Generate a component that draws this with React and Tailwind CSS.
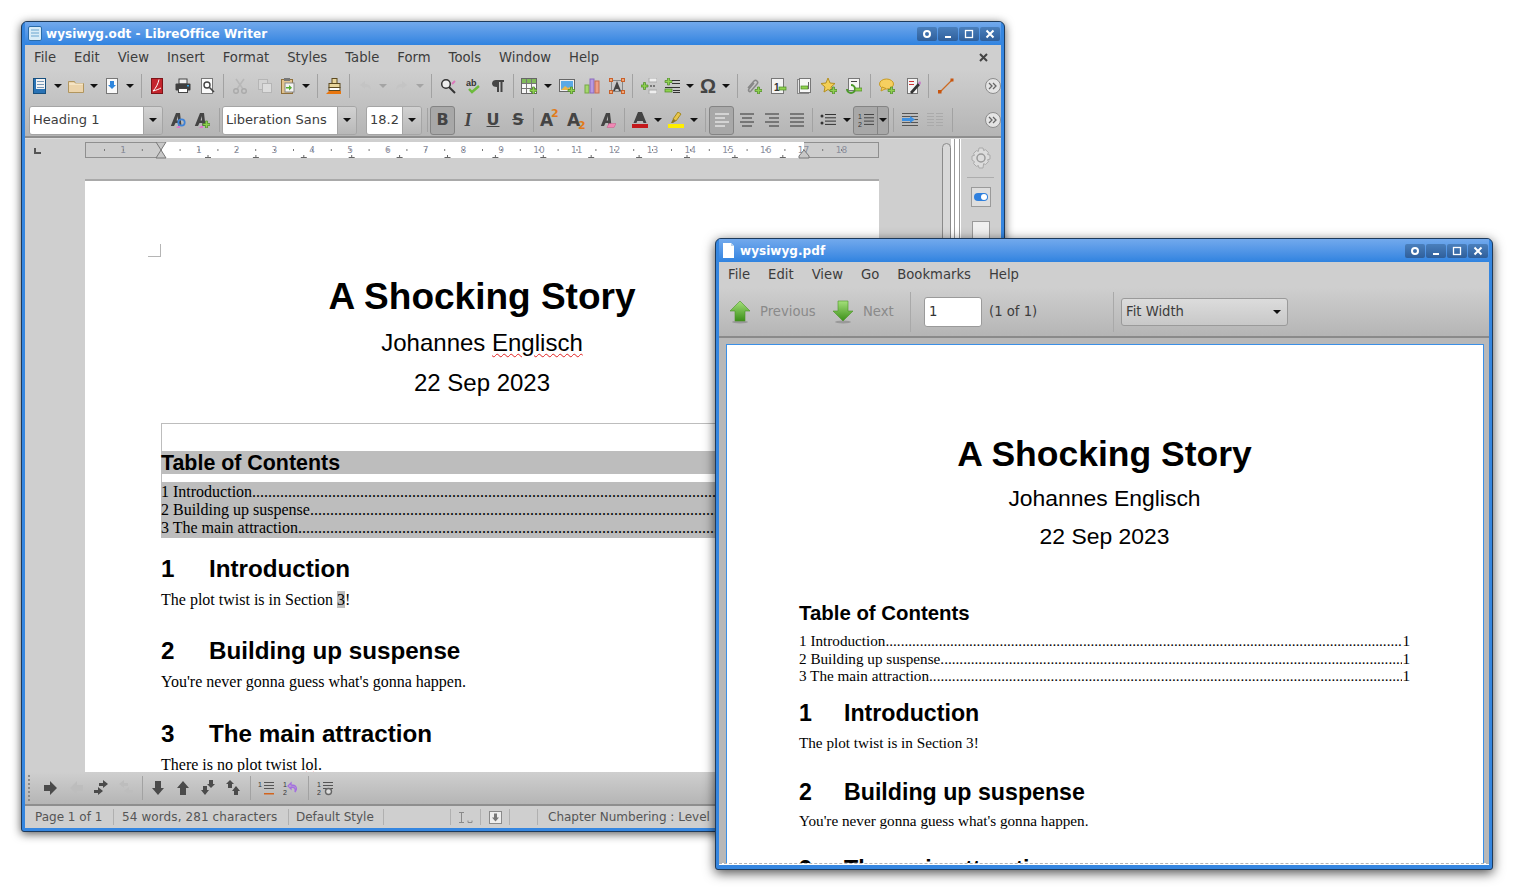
import React from 'react';

const UI = "[font-family:'DejaVu_Sans',sans-serif]";
const ARIAL = "[font-family:'Liberation_Sans',sans-serif]";
const TIMES = "[font-family:'Liberation_Serif',serif]";

const DOTS = '.'.repeat(260);

const Svg = ({ w = 16, h = 16, children }) => (
  <svg width={w} height={h} viewBox={`0 0 ${w} ${h}`} className="block shrink-0">{children}</svg>
);

const Plus = ({ x = 9, y = 9 }) => (
  <path transform={`translate(${x} ${y})`} d="M2.5 0h2v2.5H7v2H4.5V7h-2V4.5H0v-2h2.5z" fill="#8fd14f" stroke="#4b8a24" strokeWidth="0.7" />
);
const Minus = ({ x = 9, y = 10 }) => <rect x={x} y={y} width="7" height="3" fill="#8fd14f" stroke="#4b8a24" strokeWidth="0.7" />;
const Page = ({ x = 2, y = 0, w = 12, h = 16 }) => <rect x={x + 0.5} y={y + 0.5} width={w - 1} height={h - 1} fill="#fafafa" stroke="#777" />;
const Lines = ({ x, y, w, n = 4, gap = 3, c = '#444' }) => (
  <g fill={c}>{Array.from({ length: n }, (_, i) => <rect key={i} x={x} y={y + i * gap} width={w} height="1" />)}</g>
);
const ItalicA = () => <path fillRule="evenodd" d="M6 1h4l1.500 13H8.500l-.2-3H5.500L4 14H.8zM8.100 8.500L7.800 4 6.600 8.500z" fill="#444" />;

const Arrow = ({ light }) => (
  <svg width="8" height="4" viewBox="0 0 8 4" className="block shrink-0"><path d="M0 0h8L4 4z" fill={light ? '#a4a4a4' : '#111'} /></svg>
);
const Sep = ({ className = 'ml-[7px] mr-[8px]' }) => <div className={`w-px h-[24px] bg-[#a2a2a2] shrink-0 ${className}`} />;

const icons = {
  newdoc: <Svg><rect x="1.5" y="0.5" width="12" height="15" fill="#2a73b5" stroke="#17507f" /><rect x="4" y="1" width="9" height="10" fill="#f4f4f4" /><Lines x={5} y={3} w={7} n={3} c="#7a9ab8" /></Svg>,
  folder: <Svg><path d="M0.5 3.5h6l1 2h8v9h-15z" fill="#ecd4ab" stroke="#b1965f" /><path d="M1 6h14" stroke="#fff3dc" /></Svg>,
  save: <Svg><Page x={2} /><path d="M6 3h4v4h2l-4 4-4-4h2z" fill="#2f86dd" /></Svg>,
  pdf: <Svg><rect x="1.5" y="0.5" width="11" height="15" fill="#c4242c" stroke="#7d1318" /><path d="M9 1.5C8 6 6 10 3 13c4-1 6-2 8-3" fill="none" stroke="#fff" strokeWidth="1" /></Svg>,
  print: <Svg><rect x="4" y="1" width="8" height="5" fill="#eee" stroke="#444" /><rect x="0.5" y="5.5" width="15" height="7" rx="1" fill="#3f3f3f" /><rect x="12" y="7" width="2" height="1.5" fill="#37a6e8" /><rect x="3.5" y="10.5" width="9" height="4" fill="#fff" stroke="#444" /></Svg>,
  preview: <Svg><Page x={1} /><circle cx="7" cy="7" r="3" fill="#fff" stroke="#444" strokeWidth="1.4" /><path d="M9.5 9.5l4.5 4.5" stroke="#444" strokeWidth="1.6" /></Svg>,
  cut: <Svg><path d="M4 1l7 10M12 1L5 11" stroke="#b8b8b8" strokeWidth="1.6" /><circle cx="4" cy="13" r="2.3" fill="none" stroke="#aaa" strokeWidth="1.4" /><circle cx="12" cy="13" r="2.3" fill="none" stroke="#aaa" strokeWidth="1.4" /></Svg>,
  copy: <Svg><rect x="1.5" y="1.5" width="9" height="10" fill="#d3d3d3" stroke="#b5b5b5" /><rect x="5.5" y="5.5" width="9" height="9" fill="#dcdcdc" stroke="#b5b5b5" /></Svg>,
  paste: <Svg><rect x="1.5" y="1.5" width="11" height="14" fill="#e1c38e" stroke="#8e6f3a" /><rect x="4" y="0" width="6" height="3" fill="#777" /><rect x="5" y="5" width="9" height="9" fill="#f4f4f4" stroke="#888" /><path d="M6 9h3V7l3 2.8-3 2.8v-2H6z" fill="#57ad35" /></Svg>,
  clone: <Svg><rect x="6" y="0.5" width="5" height="5" fill="#e8d59c" stroke="#5d4a20" /><rect x="3" y="5.5" width="11" height="4" fill="#e8d59c" stroke="#5d4a20" /><rect x="3" y="9.5" width="11" height="3" fill="#fff" stroke="#5d4a20" /><path d="M0 16l3-3h12v3z" fill="#e8760f" /></Svg>,
  undo: <Svg><path d="M2 7l5-4v3c4 0 6 2 6 6-1-2-3-3-6-3v2z" fill="#c4c4c4" /></Svg>,
  redo: <Svg><path d="M14 7L9 3v3c-4 0-6 2-6 6 1-2 3-3 6-3v2z" fill="#c4c4c4" /></Svg>,
  find: <Svg><circle cx="6" cy="6" r="4.3" fill="#eee" stroke="#333" strokeWidth="1.5" /><path d="M9 9l6 6" stroke="#333" strokeWidth="2" /><path d="M15 3l-3 3" stroke="#dd77bb" strokeWidth="2" /></Svg>,
  spell: <Svg><text x="1" y="7.5" fontSize="9" fontWeight="700" fill="#333" className={ARIAL}>ab</text><path d="M4 11l3 3 7-6" fill="none" stroke="#6cbb3c" strokeWidth="2.4" /></Svg>,
  para: <Svg><path d="M6 2h8v2h-1.5v10h-2V4H9v10H7V9C4 9 2 8 2 5.500S4 2 6 2z" fill="#444" /></Svg>,
  table: <Svg><rect x="0.5" y="0.5" width="15" height="15" fill="#f7f7f7" stroke="#666" /><rect x="1" y="1" width="14" height="4" fill="#7fb95a" /><path d="M5.500 1v14M10.500 1v14M1 5.500h14M1 10.500h14" stroke="#777" /><Plus /></Svg>,
  image: <Svg><rect x="0.5" y="1.5" width="15" height="12" fill="#f0f0f0" stroke="#666" /><rect x="2" y="3" width="12" height="9" fill="#5aa9e6" /><path d="M2 12l4-4 3 2 2-1 3 3z" fill="#e8b64c" /><Plus /></Svg>,
  chart: <Svg><rect x="1" y="7" width="4" height="8" fill="#a5d86e" stroke="#76a845" /><rect x="6" y="1" width="4" height="14" fill="#b79ae0" stroke="#8a68bd" /><rect x="11" y="3" width="4" height="12" fill="#ee9f86" stroke="#c56b50" /></Svg>,
  textbox: <Svg><rect x="2.500" y="2.500" width="11" height="11" fill="none" stroke="#444" strokeDasharray="1 1" /><rect x="0.500" y="0.500" width="3" height="3" fill="#f2a777" stroke="#c8602a" /><rect x="12.500" y="0.500" width="3" height="3" fill="#f2a777" stroke="#c8602a" /><rect x="0.500" y="12.500" width="3" height="3" fill="#f2a777" stroke="#c8602a" /><rect x="12.500" y="12.500" width="3" height="3" fill="#f2a777" stroke="#c8602a" /><path d="M8 3l4 10h-2l-.7-2H6.700L6 13H4z" fill="#444" /></Svg>,
  field: <Svg><rect x="8" y="0" width="8" height="4" fill="#eee" stroke="#aaa" /><rect x="8" y="12" width="8" height="4" fill="#eee" stroke="#aaa" /><Plus x={0} y={4.500} /><path d="M9 8h2M12 8h2" stroke="#777" strokeWidth="2" /></Svg>,
  rows: <Svg><Plus x={1} y={0} /><Lines x={8} y={2} w={8} n={2} gap={3} c="#333" /><Lines x={1} y={9} w={15} n={1} c="#333" /><Minus x={1} y={11} /><Lines x={9} y={12} w={7} n={2} gap={2} c="#333" /></Svg>,
  link: <Svg><path d="M2 10l6-7c2-2 5 1 3 3l-6 7c-1.500 1.500-3.500-.5-2-2l5-6" fill="none" stroke="#888" strokeWidth="1.500" /><Plus /></Svg>,
  foot: <Svg><rect x="0.500" y="0.500" width="12" height="15" fill="#f4f4f4" stroke="#777" /><text x="3" y="13" fontSize="10" fontWeight="700" fill="#333" className={ARIAL}>1</text><Minus x={8} y={9} /></Svg>,
  end: <Svg><rect x="1.500" y="1.500" width="11" height="14" fill="#e6e6e6" stroke="#888" /><rect x="3.500" y="0.500" width="11" height="14" fill="#f7f7f7" stroke="#777" /><Minus x={5} y={8} /><rect x="12" y="4" width="1" height="7" fill="#666" /></Svg>,
  star: <Svg><path d="M7 0l2 5 5 .5-4 3.500 1 5-4-2.500-4 2.500 1-5-4-3.500L5 5z" fill="#f3cf55" stroke="#b48f1f" /><Plus /></Svg>,
  cross: <Svg><rect x="2.500" y="0.500" width="11" height="12" fill="#f4f4f4" stroke="#777" /><rect x="5" y="3" width="6" height="1" fill="#444" /><path d="M1 11a4 4 0 1 0 4-4" fill="none" stroke="#4b9a2a" strokeWidth="2" /><Minus x={9} y={10} /></Svg>,
  comment: <Svg><ellipse cx="7.500" cy="6" rx="7" ry="5" fill="#f6cf5f" stroke="#c69a25" /><path d="M3 9l-1 4 5-2.500z" fill="#f6cf5f" stroke="#c69a25" /><Plus /></Svg>,
  track: <Svg><rect x="2.500" y="0.500" width="10" height="15" fill="#f4f4f4" stroke="#777" /><Lines x={4} y={3} w={5} n={2} gap={3} c="#cc3333" /><path d="M5 14l8-9 2 2-8 9z" fill="#333" /><path d="M13 5l2 2 1-2-1-2z" fill="#c678c8" /></Svg>,
  line: <Svg><path d="M2 14L14 2" stroke="#cc6a22" strokeWidth="1.200" /><rect x="0" y="12" width="3.500" height="3.500" fill="#c8550f" /><rect x="12.500" y="0.500" width="3" height="3" fill="#c8550f" /></Svg>,
  styleUpd: <Svg><ItalicA /><circle cx="11.500" cy="10.500" r="3.200" fill="none" stroke="#3f82d6" strokeWidth="1.800" /><path d="M6 16l2-2h2v2z" fill="#df77c8" /></Svg>,
  styleNew: <Svg><ItalicA /><Plus /><path d="M5 16l2-2h2v2z" fill="#df77c8" /></Svg>,
  clearFmt: <Svg><ItalicA /><path d="M7 15.500l2-4h7l-2 4z" fill="#f088b4" stroke="#c45888" strokeWidth="0.500" /></Svg>,
  fontColor: <Svg><path d="M6 0h4l4.500 11H11.500l-.7-2H5.200l-.7 2H1.500z" fill="#444" /><rect x="0" y="12" width="16" height="4" fill="#c4191c" /></Svg>,
  highlight: <Svg><path d="M10 0l3 2-5 7-3-2z" fill="#e7c54b" stroke="#a58a20" /><path d="M5 7l3 2-3 2H3z" fill="#8a7426" /><rect x="0" y="12" width="16" height="4" fill="#ffee00" /></Svg>,
  outIn: <Svg><Lines x={0} y={1} w={16} n={5} gap={3} c="#555" /><path d="M0 6h8V4l5 3.500L8 11V9H0z" fill="#3d8fe0" /></Svg>,
  outOut: <Svg><Lines x={0} y={1} w={7} n={5} gap={3} c="#aaa" /><Lines x={9} y={1} w={7} n={5} gap={3} c="#aaa" /></Svg>,
  bullets: <Svg><circle cx="2" cy="4" r="1.500" fill="#333" /><circle cx="2" cy="11" r="1.500" fill="#333" /><Lines x={5} y={2} w={11} n={4} gap={3.300} c="#333" /></Svg>,
  numbers: <Svg><text x="0" y="7" fontSize="7" fill="#333" className={ARIAL}>1</text><text x="0" y="15" fontSize="7" fill="#333" className={ARIAL}>2</text><Lines x={6} y={2} w={10} n={4} gap={3.300} c="#444" /></Svg>,
  right: <Svg><path d="M1 5h6V1l7 7-7 7v-4H1z" fill="#4b4b4b" /></Svg>,
  left: <Svg><path d="M15 5H9V1L2 8l7 7v-4h6z" fill="#bdbdbd" /></Svg>,
  right2: <Svg><path d="M6 3h4V0l5 4-5 4V6H6z" fill="#4b4b4b" /><path d="M1 10h4V7l5 4-5 4v-2H1z" fill="#4b4b4b" /></Svg>,
  left2: <Svg><path d="M10 3H6V0L1 4l5 4V6h4z" fill="#bdbdbd" /><path d="M15 10h-4V7l-5 4 5 4v-2h4z" fill="#bdbdbd" /></Svg>,
  down: <Svg><path d="M5 1h6v7h3l-6 7-6-7h3z" fill="#4b4b4b" /></Svg>,
  up: <Svg><path d="M5 15h6V8h3L8 1 2 8h3z" fill="#4b4b4b" /></Svg>,
  down2: <Svg><path d="M9 0h4v4h2l-4 4-4-4h2z" fill="#4b4b4b" /><path d="M3 6h4v4h2l-4 5-4-5h2z" fill="#4b4b4b" /></Svg>,
  up2: <Svg><path d="M3 8h4V4h2L5 0 1 4h2z" fill="#4b4b4b" /><path d="M9 15h4v-4h2l-4-5-4 5h2z" fill="#4b4b4b" /></Svg>,
  numList: <Svg><text x="0" y="7" fontSize="7" fill="#333" className={ARIAL}>1</text><Lines x={6} y={2} w={10} n={3} gap={3} c="#555" /><rect x="6" y="13" width="10" height="1.500" fill="#d2641e" /></Svg>,
  numUndo: <Svg><text x="0" y="7" fontSize="7" fill="#333" className={ARIAL}>1</text><text x="0" y="15" fontSize="7" fill="#333" className={ARIAL}>2</text><path d="M8 3l-3 3 3 3V7c3 0 5 1 4 5 3-4 1-7-4-7z" fill="none" stroke="#a46fe0" strokeWidth="1.300" /></Svg>,
  numGear: <Svg><text x="0" y="7" fontSize="7" fill="#333" className={ARIAL}>1</text><text x="0" y="15" fontSize="7" fill="#333" className={ARIAL}>2</text><Lines x={6} y={2} w={10} n={3} gap={3} c="#555" /><circle cx="11.500" cy="11.500" r="3" fill="#ddd" stroke="#666" strokeWidth="1.400" /></Svg>,
};

const Ic = ({ n }) => icons[n];

const More = ({ className = '' }) => (
  <div className={`absolute left-[960px] w-[16px] h-[16px] rounded-full border border-[#8c8c8c] bg-[#e4e4e4] flex items-center justify-center ${className}`}>
    <svg width="10" height="8" viewBox="0 0 10 8"><path d="M1 1l3 3-3 3M5 1l3 3-3 3" fill="none" stroke="#666" strokeWidth="1.300" /></svg>
  </div>
);

const WinButtons = () => (
  <div className="flex gap-px mr-[1px]">
    {[
      <svg key="a" width="10" height="10" viewBox="0 0 10 10"><circle cx="5" cy="5" r="3" fill="none" stroke="#fff" strokeWidth="2" /></svg>,
      <svg key="b" width="10" height="10" viewBox="0 0 10 10"><rect x="2" y="7" width="6" height="2" fill="#fff" /></svg>,
      <svg key="c" width="10" height="10" viewBox="0 0 10 10"><rect x="1.500" y="1.500" width="7" height="7" fill="none" stroke="#fff" strokeWidth="1.300" /></svg>,
      <svg key="d" width="10" height="10" viewBox="0 0 10 10"><path d="M1.500 1.500l7 7M8.500 1.500l-7 7" stroke="#fff" strokeWidth="2" /></svg>,
    ].map((g, i) => (
      <div key={i} className="w-[20px] h-[14px] rounded-[2px] bg-gradient-to-b from-[#4a7fbc] to-[#2f5f9b] flex items-center justify-center">{g}</div>
    ))}
  </div>
);

const TitleBar = ({ icon, title }) => (
  <div className="h-[23px] shrink-0 flex items-center justify-between bg-gradient-to-b from-[#72a9ec] to-[#2f83e0] pl-[3px]">
    <div className="flex items-center gap-[4px]">
      {icon}
      <span className={`${UI} text-[12px] font-bold text-white tracking-[0.05px]`}>{title}</span>
    </div>
    <WinButtons />
  </div>
);

const Combo = ({ text, w, arrowW = 'w-[19px]' }) => (
  <div className={`flex h-[29px] shrink-0 rounded-[3px] border border-[#a5a5a5] overflow-hidden ${w}`}>
    <div className={`flex-1 bg-white flex items-center pl-[3px] ${UI} text-[13px] text-[#3c3c3c]`}>{text}</div>
    <div className={`${arrowW} bg-gradient-to-b from-[#d2d2d2] to-[#b8b8b8] border-l border-[#a5a5a5] flex items-center justify-center`}><Arrow /></div>
  </div>
);

const Ruler = () => {
  const nums = [[38, '1'], ...Array.from({ length: 18 }, (_, i) => [76 + 37.8 * (i + 1), String(i + 1)])];
  const tabs = Array.from({ length: 13 }, (_, i) => 123 + 47.9 * i);
  const dots = Array.from({ length: 40 }, (_, i) => 19 + 18.9 * i);
  return (
    <svg width="796" height="18" viewBox="0 0 796 18" className="block">
      <rect x="0.500" y="0.500" width="793" height="15" fill="#cdcdcd" stroke="#8f8f8f" />
      <rect x="76" y="0" width="643" height="16" fill="#fff" />
      {dots.map((x) => <rect key={x} x={x} y="7" width="1" height="2" fill="#777" />)}
      {tabs.map((x) => <path key={x} d={`M${x - 3} 15.500h6M${x} 13v3`} stroke="#666" />)}
      {nums.map(([x, t]) => (
        <text key={x} x={x} y="11" textAnchor="middle" fontSize="9" fill="#8a8d9c" className={UI}>{t}</text>
      ))}
      <path d="M71 0h10l-5 8zM71 16h10l-5-8z" fill="#c8c8c8" stroke="#777" />
      <path d="M714 16h10v-2l-5-6-5 6z" fill="#c8c8c8" stroke="#777" />
    </svg>
  );
};

const WriterPage = () => (
  <div className={`relative ml-[60px] w-[794px] h-[700px] bg-white border-t-2 border-[#a9a9a9] px-[76px] ${TIMES} text-black`}>
    <div className="absolute left-[63px] top-[63px] w-[13px] h-[13px] border-r border-b border-[#b5b5b5]" />
    <div className={`${ARIAL} text-center font-bold text-[37px] leading-[44px] pt-[94px]`}>A Shocking Story</div>
    <div className={`${ARIAL} text-center text-[24px] leading-[28px] mt-[10px]`}>
      Johannes <span className="underline decoration-wavy decoration-[#e02020] decoration-1 underline-offset-2">Englisch</span>
    </div>
    <div className={`${ARIAL} text-center text-[24px] leading-[28px] mt-[12px]`}>22 Sep 2023</div>
    <div className="mt-[26px] border-t border-l border-[#bdbdbd] pt-[27px]">
      <div className={`${ARIAL} bg-[#bdbdbd] h-[23px] font-bold text-[21.4px] leading-[24px] -ml-px`}>Table of Contents</div>
      <div className="bg-[#bdbdbd] mt-[8px] h-[56px] pt-[1px] -ml-px text-[16px] leading-[18px] overflow-hidden whitespace-nowrap">
        <div>1 Introduction{DOTS}</div>
        <div>2 Building up suspense{DOTS}</div>
        <div>3 The main attraction{DOTS}</div>
      </div>
    </div>
    <div className={`${ARIAL} flex font-bold text-[24.2px] leading-[30px] mt-[16px]`}><span className="w-[48px]">1</span>Introduction</div>
    <div className="text-[16px] leading-[20px] mt-[6px]">The plot twist is in Section <span className="bg-[#bdbdbd]">3</span>!</div>
    <div className={`${ARIAL} flex font-bold text-[24.2px] leading-[30px] mt-[26px]`}><span className="w-[48px]">2</span>Building up suspense</div>
    <div className="text-[16px] leading-[20px] mt-[6px]">You're never gonna guess what's gonna happen.</div>
    <div className={`${ARIAL} flex font-bold text-[24.2px] leading-[30px] mt-[27px]`}><span className="w-[48px]">3</span>The main attraction</div>
    <div className="text-[16px] leading-[20px] mt-[6px]">There is no plot twist <span className="underline decoration-wavy decoration-[#e02020] decoration-1">lol</span>.</div>
  </div>
);

const WriterWindow = () => (
  <div className="absolute left-[21px] top-[21px] w-[984px] h-[811px] rounded-t-[6px] rounded-b-[3px] border border-[#1d3a5c] bg-[#3586e0] shadow-[0_2px_10px_rgba(0,0,0,0.65)] flex flex-col px-[3px] pb-[3px] overflow-hidden">
    <TitleBar
      title="wysiwyg.odt - LibreOffice Writer"
      icon={<svg width="14" height="15" viewBox="0 0 14 15"><rect x="0.500" y="0.500" width="13" height="14" rx="1.500" fill="#d9ecf7" stroke="#2a6ba8" /><path d="M3 4h8M3 7h8M3 10h8" stroke="#6aa5cf" /></svg>}
    />
    <div className={`flex-1 min-h-0 flex flex-col relative bg-[#cfcfcf] ${UI} text-[#3c3c3c]`}>
      <div className="relative h-[24px] shrink-0 flex items-center pt-px pl-[9px] gap-[18px] text-[13.2px]">
        {['File', 'Edit', 'View', 'Insert', 'Format', 'Styles', 'Table', 'Form', 'Tools', 'Window', 'Help'].map((m) => <span key={m}>{m}</span>)}
        <svg width="9" height="9" viewBox="0 0 9 9" className="absolute left-[954px] top-[8px]"><path d="M1 1l7 7M8 1L1 8" stroke="#444" strokeWidth="2" /></svg>
      </div>
      <div className="relative h-[69px] shrink-0 bg-gradient-to-b from-[#cfcfcf] to-[#b5b5b5] border-b-2 border-[#8e8e8e]">
        <div className="h-[35px] pb-px flex items-center pl-[7px]">
          <div className="flex items-center gap-[6px]">
            <Ic n="newdoc" /><Arrow /><Ic n="folder" /><Arrow /><Ic n="save" /><Arrow />
          </div>
          <Sep />
          <div className="flex items-center gap-[9px]"><Ic n="pdf" /><Ic n="print" /><Ic n="preview" /></div>
          <Sep />
          <div className="flex items-center"><Ic n="cut" /><div className="ml-[9px]"><Ic n="copy" /></div><div className="ml-[7px]"><Ic n="paste" /></div><div className="ml-[6px]"><Arrow /></div></div>
          <Sep />
          <Ic n="clone" />
          <Sep />
          <div className="flex items-center gap-[5px]"><Ic n="undo" /><Arrow light /><div className="mx-px"><Ic n="redo" /></div><div className="ml-px"><Arrow light /></div></div>
          <Sep className="ml-[7px] mr-[8px]" />
          <div className="flex items-center gap-[9px]"><Ic n="find" /><Ic n="spell" /><Ic n="para" /></div>
          <Sep className="ml-[7px] mr-[7px]" />
          <div className="flex items-center gap-[7px]"><Ic n="table" /><Arrow /><Ic n="image" /><div className="ml-[2px]"><Ic n="chart" /></div><div className="ml-[2px]"><Ic n="textbox" /></div></div>
          <Sep />
          <div className="flex items-center gap-[6px]"><Ic n="field" /><div className="ml-px"><Ic n="rows" /></div><Arrow />
            <span className={`${ARIAL} font-bold text-[20px] leading-[16px] w-[16px] text-center text-[#444]`}>Ω</span><Arrow />
          </div>
          <Sep />
          <div className="flex items-center gap-[9px]"><Ic n="link" /><Ic n="foot" /><Ic n="end" /><Ic n="star" /><Ic n="cross" /></div>
          <Sep className="ml-[8px] mr-[8px]" />
          <div className="flex items-center gap-[10px]"><Ic n="comment" /><Ic n="track" /></div>
          <Sep className="ml-[7px] mr-[9px]" />
          <Ic n="line" />
        </div>
        <More className="top-[9px]" />
        <div className="h-[32px] flex items-center pl-[4px]">
          <Combo text="Heading 1" w="w-[134px]" />
          <div className="ml-[7px]"><Ic n="styleUpd" /></div>
          <div className="ml-[8px]"><Ic n="styleNew" /></div>
          <Sep className="ml-[9px] mr-[2px]" />
          <Combo text="Liberation Sans" w="w-[135px]" />
          <div className="ml-[9px]"><Combo text="18.2" w="w-[56px]" /></div>
          <Sep className="ml-[5px] mr-[2px]" />
          <div className="w-[25px] h-[29px] rounded-[3px] border border-[#848484] bg-[#a8a8a8] flex items-center justify-center">
            <span className={`${UI} font-bold text-[16px] text-[#444]`}>B</span>
          </div>
          <div className="flex items-center ml-[5px] gap-[9px] text-[#444] text-[16px]">
            <span className={`${TIMES} italic font-bold w-[16px] text-center text-[18px]`}>I</span>
            <span className={`${UI} underline font-bold w-[16px] text-center`}>U</span>
            <span className={`${UI} line-through font-bold w-[16px] text-center`}>S</span>
          </div>
          <Sep className="ml-[7px] mr-[6px]" />
          <div className="flex items-center gap-[11px] text-[#444]">
            <span className={`${UI} relative font-bold text-[17px] leading-none w-[16px]`}>A<span className="absolute -top-[4px] left-[11px] text-[11px] text-[#e07b1c]">2</span></span>
            <span className={`${UI} relative font-bold text-[17px] leading-none w-[16px]`}>A<span className="absolute top-[8px] left-[11px] text-[11px] text-[#e07b1c]">2</span></span>
          </div>
          <Sep className="ml-[8px] mr-[8px]" />
          <Ic n="clearFmt" />
          <Sep className="ml-[8px] mr-[7px]" />
          <div className="flex items-center gap-[6px]"><Ic n="fontColor" /><Arrow /></div>
          <div className="flex items-center gap-[6px] ml-[6px]"><Ic n="highlight" /><Arrow /></div>
          <Sep className="ml-[7px] mr-[3px]" />
          <div className="w-[25px] h-[29px] rounded-[3px] border border-[#848484] bg-[#a8a8a8] flex items-center justify-center">
            <svg width="16" height="14" viewBox="0 0 16 14"><path d="M1 1h14M1 5h10M1 9h14M1 13h10" stroke="#fff" /></svg>
          </div>
          <div className="flex items-center gap-[9px] ml-[5px]">
            <svg width="16" height="14" viewBox="0 0 16 14"><path d="M1 1h14M3 5h10M1 9h14M3 13h10" stroke="#333" /></svg>
            <svg width="16" height="14" viewBox="0 0 16 14"><path d="M1 1h14M5 5h10M1 9h14M5 13h10" stroke="#333" /></svg>
            <svg width="16" height="14" viewBox="0 0 16 14"><path d="M1 1h14M1 5h14M1 9h14M1 13h14" stroke="#333" /></svg>
          </div>
          <Sep className="ml-[7px] mr-[7px]" />
          <div className="flex items-center gap-[7px]"><Ic n="bullets" /><Arrow /></div>
          <div className="ml-[2px] flex w-[36px] h-[29px] rounded-[3px] border border-[#848484] bg-[#a8a8a8]">
            <div className="w-[24px] flex items-center justify-center border-r border-[#848484]"><Ic n="numbers" /></div>
            <div className="flex-1 flex items-center justify-center"><Arrow /></div>
          </div>
          <Sep className="ml-[4px] mr-[8px]" />
          <Ic n="outIn" />
          <div className="ml-[9px]"><Ic n="outOut" /></div>
          <Sep className="ml-[9px] mr-0" />
        </div>
        <More className="top-[43px]" />
      </div>
      <div className="flex-1 min-h-0 flex border-t border-[#dcdcdc]">
        <div className="w-[917px] shrink-0 overflow-hidden">
          <div className="relative h-[40px] pt-[3px]">
            <div className="absolute left-[9px] top-[9px] w-[7px] h-[6px] border-l-2 border-b-2 border-[#555]" />
            <div className="ml-[60px]"><Ruler /></div>
          </div>
          <WriterPage />
        </div>
        <div className="w-[9px] shrink-0 mt-[4px] h-[200px] rounded-t-[5px] border border-[#8a8a8a] bg-[#d8d8d8]" />
        <div className="w-[3px] shrink-0 bg-white" />
        <div className="w-[6px] shrink-0 bg-white border-x border-[#9a9a9a]" />
        <div className="w-[40px] shrink-0 flex flex-col items-center border-l border-white pt-[8px]">
          <svg width="22" height="22" viewBox="0 0 22 22">
            <path d="M9 1h4l.6 2.500 2-.8 2.800 2.800-.8 2 2.400.6v4l-2.400.6.8 2-2.800 2.800-2-.8L13 21H9l-.6-2.400-2 .8-2.800-2.800.8-2L2 13V9l2.400-.6-.8-2 2.800-2.800 2 .8z" fill="#dcdcdc" stroke="#a9a9a9" />
            <circle cx="11" cy="11" r="4" fill="none" stroke="#9a9a9a" strokeWidth="1.500" />
          </svg>
          <div className="w-[27px] h-px bg-[#adadad] mt-[8px]" />
          <div className="w-[20px] h-[20px] mt-[9px] border border-[#9a9a9a] bg-[#dedede] flex items-center justify-center">
            <div className="w-[14px] h-[8px] rounded-full bg-[#2f80de] flex justify-end items-center pr-px"><div className="w-[6px] h-[6px] rounded-full bg-white" /></div>
          </div>
          <div className="w-[18px] h-[40px] mt-[14px] border border-[#9a9a9a] bg-[#f0f0f0]" />
        </div>
      </div>
      <div className="absolute left-0 right-0 bottom-[22px] h-[34px] bg-gradient-to-b from-[#cfcfcf] to-[#b5b5b5] border-b-2 border-[#8e8e8e] flex items-center pl-[3px]">
        <div className="w-[3px] h-[26px] border-l-2 border-dotted border-[#8a8a8a]" />
        <div className="flex items-center gap-[9px] ml-[12px]"><Ic n="right" /><Ic n="left" /><Ic n="right2" /><Ic n="left2" /></div>
        <Sep className="ml-[8px] mr-[7px]" />
        <div className="flex items-center gap-[9px]"><Ic n="down" /><Ic n="up" /><Ic n="down2" /><Ic n="up2" /></div>
        <Sep className="ml-[9px] mr-[7px]" />
        <div className="flex items-center gap-[9px]"><Ic n="numList" /><Ic n="numUndo" /></div>
        <Sep className="ml-[9px] mr-[8px]" />
        <Ic n="numGear" />
      </div>
      <div className="absolute left-0 right-0 bottom-0 h-[22px] bg-[#cfcfcf] flex items-center text-[12px] text-[#555] whitespace-nowrap">
        <span className="pl-[10px] w-[88px]">Page 1 of 1</span>
        <div className="w-px h-[16px] bg-[#b0b0b0]" />
        <span className="pl-[8px] w-[174px] tracking-[0.1px]">54 words, 281 characters</span>
        <div className="w-px h-[16px] bg-[#b0b0b0]" />
        <span className="pl-[7px] w-[94px]">Default Style</span>
        <div className="w-px h-[16px] bg-[#b0b0b0]" />
        <div className="w-[66px]" />
        <div className="w-px h-[16px] bg-[#b0b0b0]" />
        <div className="w-[29px] flex justify-center">
          <svg width="15" height="13" viewBox="0 0 15 13"><path d="M1 1.500h5M3.500 1.500v10M1 11.500h5M10 9.500v2h4v-2" fill="none" stroke="#8a8a8a" /></svg>
        </div>
        <div className="w-px h-[16px] bg-[#b0b0b0]" />
        <div className="w-[28px] flex justify-center">
          <svg width="13" height="13" viewBox="0 0 13 13"><rect x="0.500" y="0.500" width="12" height="12" fill="#eee" stroke="#8a8a8a" /><path d="M5 2.500h3v4h2l-3.500 4L3 6.500h2z" fill="#777" /></svg>
        </div>
        <div className="w-px h-[16px] bg-[#b0b0b0]" />
        <div className="w-[27px]" />
        <div className="w-px h-[16px] bg-[#b0b0b0]" />
        <span className="pl-[10px]">Chapter Numbering : Level</span>
      </div>
    </div>
  </div>
);

const NavArrow = ({ up }) => (
  <svg width="20" height="24" viewBox="0 0 20 24" className="block">
    <ellipse cx="10" cy="22" rx="8" ry="1.500" fill="#999" />
    <defs>
      <linearGradient id="navgreen" x1="0" y1="0" x2="0" y2="1"><stop offset="0" stopColor="#a4e07a" /><stop offset="1" stopColor="#3b8f17" /></linearGradient>
    </defs>
    <path d={up ? 'M10 1l10 10h-5v10H5V11H0z' : 'M5 1h10v10h5L10 21 0 11h5z'} fill="url(#navgreen)" stroke="#4a9426" strokeWidth="0.600" />
  </svg>
);

const TocLine = ({ label }) => (
  <div className="flex h-[17.500px] leading-[17.500px]">
    <span className="whitespace-nowrap">{label}</span>
    <span className="flex-1 overflow-hidden whitespace-nowrap min-w-0">{DOTS}</span>
    <span>1</span>
  </div>
);

const PdfWindow = () => (
  <div className="absolute left-[715px] top-[238px] w-[778px] h-[632px] rounded-t-[6px] rounded-b-[3px] border border-[#1d3a5c] bg-[#3586e0] shadow-[0_3px_12px_rgba(0,0,0,0.7)] flex flex-col px-[3px] pb-[4px] overflow-hidden">
    <TitleBar
      title="wysiwyg.pdf"
      icon={<svg width="11" height="15" viewBox="0 0 11 15" className="ml-px mr-[2px]"><path d="M0 0h8l3 3v12H0z" fill="#fff" /><path d="M8 0v3h3z" fill="#bcd3ea" /></svg>}
    />
    <div className={`flex-1 min-h-0 flex flex-col bg-[#b8b8b8] ${UI} text-[#3c3c3c]`}>
      <div className="h-[25px] shrink-0 bg-[#cfcfcf] flex items-center pl-[9px] gap-[18px] text-[13.2px]">
        {['File', 'Edit', 'View', 'Go', 'Bookmarks', 'Help'].map((m) => <span key={m}>{m}</span>)}
      </div>
      <div className="h-[51px] shrink-0 bg-gradient-to-b from-[#cfcfcf] to-[#b5b5b5] border-b-2 border-[#8a8a8a] flex items-center pl-[11px] text-[13.2px]">
        <NavArrow up />
        <span className="ml-[10px] text-[#8a8a8a] w-[63px]">Previous</span>
        <div className="ml-[10px]"><NavArrow /></div>
        <span className="ml-[10px] text-[#8a8a8a] w-[32px]">Next</span>
        <div className="ml-[15px] w-px h-[40px] bg-[#a9a9a9]" />
        <div className="ml-[13px] w-[58px] h-[30px] rounded-[3px] border border-[#9a9a9a] bg-white flex items-center pl-[4px] text-[#333]">1</div>
        <span className="ml-[7px] w-[124px]">(1 of 1)</span>
        <div className="w-px h-[40px] bg-[#a9a9a9]" />
        <div className="ml-[7px] w-[167px] h-[28px] rounded-[3px] border border-[#9a9a9a] bg-gradient-to-b from-[#dcdcdc] to-[#c8c8c8] flex items-center justify-between pl-[4px] pr-[6px]">
          <span>Fit Width</span><Arrow />
        </div>
      </div>
      <div className="flex-1 min-h-0 pt-[6px] pl-[7px] pr-[5px]">
        <div className="relative h-full bg-white border border-[#3b8fe6] border-b-0 pl-[72px] pr-[73px] overflow-hidden text-black">
          <div className={`${ARIAL} text-center font-bold text-[35.5px] leading-[42px] pt-[88px]`}>A Shocking Story</div>
          <div className={`${ARIAL} text-center text-[22.9px] leading-[28px] mt-[9px]`}>Johannes Englisch</div>
          <div className={`${ARIAL} text-center text-[22.9px] leading-[28px] mt-[10px]`}>22 Sep 2023</div>
          <div className={`${ARIAL} font-bold text-[20.4px] leading-[26px] mt-[50px]`}>Table of Contents</div>
          <div className={`${TIMES} text-[15.2px] mt-[6px]`}>
            <TocLine label="1 Introduction" />
            <TocLine label="2 Building up suspense" />
            <TocLine label="3 The main attraction" />
          </div>
          <div className={`${ARIAL} flex font-bold text-[23.2px] leading-[28px] mt-[14px]`}><span className="w-[45px]">1</span>Introduction</div>
          <div className={`${TIMES} text-[15.2px] leading-[20px] mt-[6px]`}>The plot twist is in Section 3!</div>
          <div className={`${ARIAL} flex font-bold text-[23.2px] leading-[28px] mt-[25px]`}><span className="w-[45px]">2</span>Building up suspense</div>
          <div className={`${TIMES} text-[15.2px] leading-[20px] mt-[5px]`}>You're never gonna guess what's gonna happen.</div>
          <div className={`${ARIAL} flex font-bold text-[23.2px] leading-[28px] mt-[24px]`}><span className="w-[45px]">3</span>The main attraction</div>
        </div>
      </div>
      <div className="h-[2px] shrink-0 border-t border-dashed border-[#b5b5b5] bg-white" />
    </div>
  </div>
);

export default function App() {
  return (
    <div className="relative w-[1514px] h-[891px] bg-white overflow-hidden">
      <WriterWindow />
      <PdfWindow />
    </div>
  );
}
